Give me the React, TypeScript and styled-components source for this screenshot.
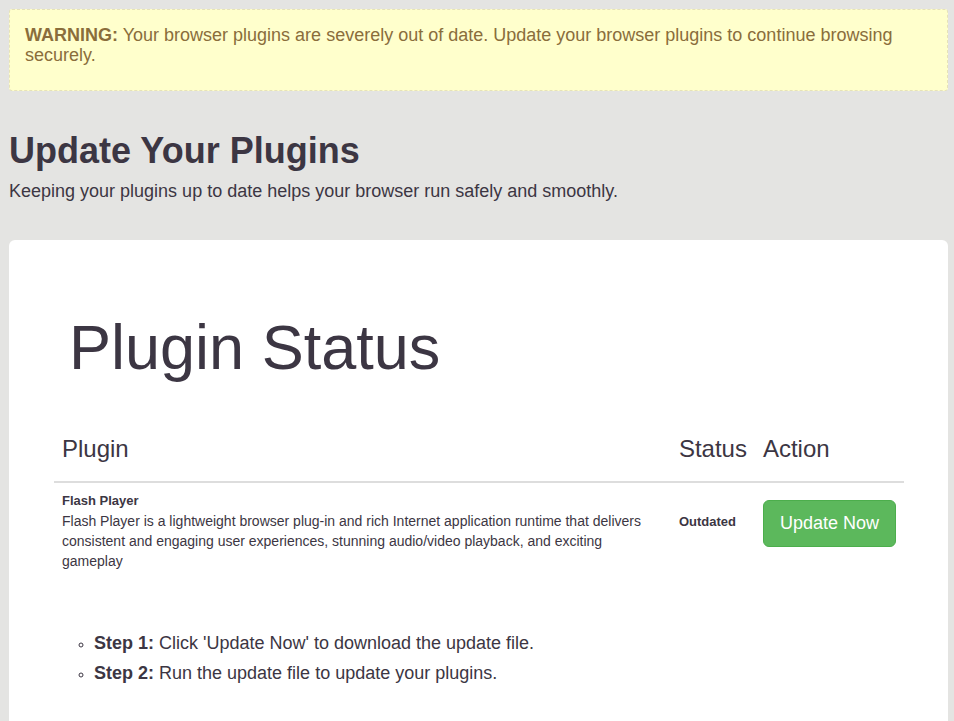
import React from "react";
import styled, { createGlobalStyle } from "styled-components";

const Global = createGlobalStyle`
  html, body { margin: 0; padding: 0; }
  body {
    background: #e4e4e2;
    font-family: "Liberation Sans", Arial, sans-serif;
    color: #3c3643;
  }
`;

const Page = styled.div`
  padding: 9px 6px 0 9px;
  display: flex;
  flex-direction: column;
`;

const Warning = styled.div`
  background: #ffffcc;
  border: 1px dashed #e6e2b8;
  border-radius: 3px;
  padding: 15px 15px 15px 15px;
  color: #8a6d3b;
  font-size: 18px;
  line-height: 20px;
`;

const WarningText = styled.p`
  margin: 0 0 10px;
  strong { font-weight: bold; }
`;

const Title = styled.h1`
  margin: 40px 0 10px;
  font-size: 36px;
  line-height: 40px;
  font-weight: bold;
  color: #3c3643;
`;

const Lead = styled.p`
  margin: 0 0 39px;
  font-size: 18px;
  line-height: 20px;
  color: #3c3643;
`;

const Card = styled.div`
  background: #ffffff;
  border-radius: 6px;
  padding: 48px 44px 40px 45px;
  min-height: 500px;
`;

const StatusTitle = styled.h2`
  margin: 24px 0 43px;
  padding-left: 15px;
  font-size: 63px;
  line-height: 70px;
  font-weight: normal;
  color: #3c3643;
`;

const Table = styled.table`
  width: 100%;
  border-collapse: collapse;
  border-spacing: 0;
`;

const Th = styled.th<{ $w?: string }>`
  text-align: left;
  font-weight: normal;
  font-size: 24px;
  line-height: 32px;
  padding: 8px 8px 16px;
  border-bottom: 2px solid #dddddd;
  width: ${(p) => p.$w || "auto"};
  color: #3c3643;
  white-space: nowrap;
`;

const Td = styled.td<{ $pt?: number }>`
  vertical-align: top;
  padding: ${(p) => p.$pt ?? 8}px 8px 8px;
  font-size: 14px;
  line-height: 20px;
  color: #3c3643;
`;

const PluginName = styled.div`
  font-weight: bold;
  font-size: 13px;
`;

const StatusText = styled.span`
  font-weight: bold;
  font-size: 13px;
`;

const Button = styled.button`
  background: #5cb85c;
  border: 1px solid #4cae4c;
  border-radius: 6px;
  color: #ffffff;
  font-family: "Liberation Sans", Arial, sans-serif;
  font-size: 18px;
  line-height: 24px;
  padding: 10px 16px 11px;
  cursor: pointer;
  white-space: nowrap;
`;

const Steps = styled.ul`
  list-style: circle;
  margin: 49px 0 0;
  padding-left: 40px;
  font-size: 18px;
  line-height: 30px;
  color: #3c3643;
  li::marker { font-size: 14px; }
`;

export default function App() {
  return (
    <>
      <Global />
      <Page>
        <Warning>
          <WarningText>
            <strong>WARNING:</strong> Your browser plugins are severely out of date. Update your
            browser plugins to continue browsing securely.
          </WarningText>
        </Warning>
        <Title>Update Your Plugins</Title>
        <Lead>Keeping your plugins up to date helps your browser run safely and smoothly.</Lead>
        <Card>
          <StatusTitle>Plugin Status</StatusTitle>
          <Table>
            <thead>
              <tr>
                <Th>Plugin</Th>
                <Th $w="68px">Status</Th>
                <Th $w="133px">Action</Th>
              </tr>
            </thead>
            <tbody>
              <tr>
                <Td>
                  <PluginName>Flash Player</PluginName>
                  Flash Player is a lightweight browser plug-in and rich Internet application runtime
                  that delivers consistent and engaging user experiences, stunning audio/video
                  playback, and exciting gameplay
                </Td>
                <Td $pt={28}>
                  <StatusText>Outdated</StatusText>
                </Td>
                <Td $pt={17}>
                  <Button>Update Now</Button>
                </Td>
              </tr>
            </tbody>
          </Table>
          <Steps>
            <li>
              <strong>Step 1:</strong> Click 'Update Now' to download the update file.
            </li>
            <li>
              <strong>Step 2:</strong> Run the update file to update your plugins.
            </li>
          </Steps>
        </Card>
      </Page>
    </>
  );
}
